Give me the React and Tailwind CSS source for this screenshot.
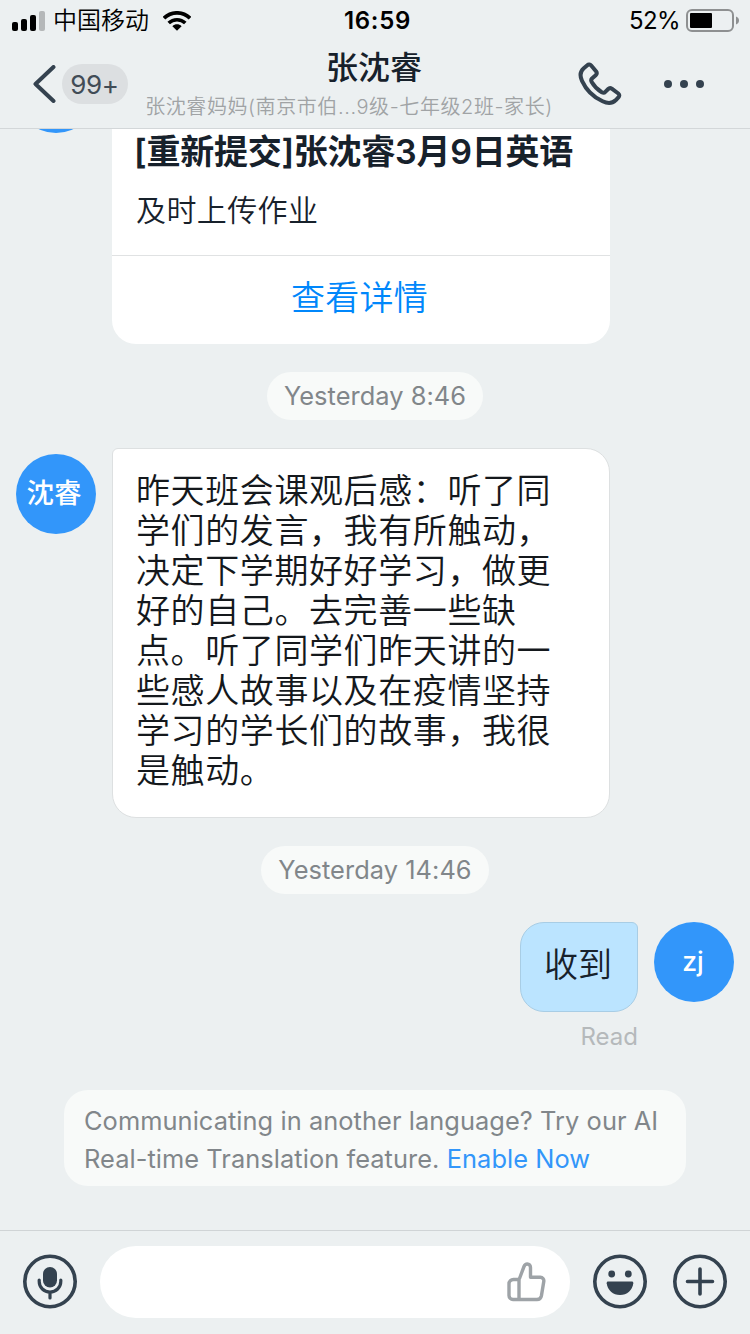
import React from 'react';

const MESSAGE_LINES = [
  '昨天班会课观后感：听了同',
  '学们的发言，我有所触动，',
  '决定下学期好好学习，做更',
  '好的自己。去完善一些缺',
  '点。听了同学们昨天讲的一',
  '些感人故事以及在疫情坚持',
  '学习的学长们的故事，我很',
  '是触动。',
];

const SignalIcon = () => (
  <svg width="33" height="20" viewBox="0 0 33 20" className="shrink-0">
    <rect x="0" y="11" width="6" height="9" rx="2" fill="#000" />
    <rect x="9" y="8" width="6" height="12" rx="2" fill="#000" />
    <rect x="18" y="4" width="6" height="16" rx="2" fill="#000" />
    <rect x="27" y="0" width="6" height="20" rx="2" fill="#b5b8b9" />
  </svg>
);

const WifiIcon = () => (
  <svg width="28" height="20" viewBox="0 0 28 20" fill="none" stroke="#000" className="shrink-0">
    <path d="M1 7.2C8.3 0.1 19.7 0.1 27 7.2" strokeWidth="3.8" />
    <path d="M5.7 12C10.4 7.6 17.6 7.6 22.3 12" strokeWidth="3.6" />
    <path d="M9.4 15.3C12 12.7 16 12.7 18.6 15.3L14 19.8Z" fill="#000" stroke="none" />
  </svg>
);

const BatteryIcon = () => (
  <svg width="54" height="23" viewBox="0 0 54 23" className="shrink-0">
    <rect x="1" y="1" width="46" height="21" rx="5" fill="none" stroke="#8e9091" strokeWidth="2" />
    <rect x="4" y="4" width="22" height="15" rx="1" fill="#000" />
    <path d="M50 7.5c2 .7 3 2.2 3 4s-1 3.3-3 4z" fill="#8e9091" />
  </svg>
);

const PhoneIcon = () => (
  <svg width="44" height="44" viewBox="0 0 44 44" fill="none" stroke="#34424f" strokeWidth="4" strokeLinejoin="round" className="shrink-0">
    <path d="M9.3 3.2C10.5 2.1 12.2 2.4 13.2 3.5L18 9.3C18.9 10.5 18.8 12.2 17.7 13.2L14 16.5C13 17.5 13 18.8 13.7 20C16.3 24.5 19.5 27.7 23.8 30.3C25.1 31 26.4 30.9 27.3 29.9L30.2 27C31.2 26 32.6 25.9 33.8 26.7L40.3 31.5C41.5 32.5 41.6 34 40.6 35.1L37.6 38.3C34.5 41.3 29.5 41.7 24.6 39.3C15.4 35 8 27.6 4 18.8C1.7 13.8 2 9.7 5.5 6.5Z" />
  </svg>
);

const MicIcon = () => (
  <svg width="54" height="54" viewBox="0 0 54 54" fill="none" stroke="#34424f" strokeLinecap="round" className="shrink-0 overflow-visible">
    <circle cx="27" cy="26.5" r="25.2" strokeWidth="3.6" />
    <rect x="20" y="12" width="14" height="20.5" rx="7" fill="#34424f" stroke="none" />
    <path d="M16.2 25v1.5c0 6 4.8 10.5 10.8 10.5s10.8-4.5 10.8-10.5V25" strokeWidth="3.2" />
    <path d="M27 37.5V43" strokeWidth="3.2" />
  </svg>
);

const SmileIcon = () => (
  <svg width="54" height="54" viewBox="0 0 54 54" className="shrink-0 overflow-visible">
    <circle cx="27" cy="26.5" r="25.2" fill="none" stroke="#34424f" strokeWidth="3.6" />
    <circle cx="18.7" cy="19" r="3.4" fill="#34424f" />
    <circle cx="35.3" cy="19" r="3.4" fill="#34424f" />
    <path d="M15.2 26.5h23.6c1 0 1.6.7 1.5 1.7C39.5 35.1 34 40 27 40S14.5 35.1 13.7 28.2c-.1-1 .5-1.7 1.5-1.7z" fill="#34424f" />
  </svg>
);

const PlusIcon = () => (
  <svg width="54" height="54" viewBox="0 0 54 54" fill="none" stroke="#34424f" strokeLinecap="round" className="shrink-0 overflow-visible">
    <circle cx="27" cy="26.5" r="25.2" strokeWidth="3.6" />
    <path d="M14.5 26.5h25M27 14v25" strokeWidth="3.6" />
  </svg>
);

const ThumbIcon = () => (
  <svg width="40" height="40" viewBox="0 0 40 40" fill="none" stroke="#9ea3a7" strokeWidth="3.4" strokeLinejoin="round" className="shrink-0">
    <path d="M12.5 17.5H7.5A4.5 4.5 0 0 0 3 22v11.500a4 4 0 0 0 4 4h24a4.500 4.500 0 0 0 4.400-3.600l2.400-14.500a3.500 3.500 0 0 0-3.400-4.100H24.500V5.500c0-2-1.300-3.500-3.200-3.500-1.600 0-2.700 1-3.300 2.500L13.500 16.500z" />
    <path d="M13 18v19.500" />
  </svg>
);

const Avatar = ({ name, latin }) => (
  <div
    className={`flex h-20 w-20 shrink-0 items-center justify-center rounded-full bg-[#3296fa] pb-px leading-none text-white ${
      latin ? 'pr-[2px] text-[26.5px] font-[450]' : 'pr-1 text-[27.5px] font-medium'
    }`}
  >
    {name}
  </div>
);

const TimePill = ({ children }) => (
  <div className="mt-7 flex h-12 shrink-0 items-center self-center whitespace-nowrap rounded-full bg-[#f8faf9] px-[17px] pt-px text-[25.4px] tracking-[0.05px] text-[#81868a]">
    {children}
  </div>
);

const App = () => {
  return (
    <div className="flex h-[1334px] w-[750px] flex-col overflow-hidden bg-[#ecf0f1] font-[Inter,'Noto_Sans_CJK_SC',sans-serif] text-[#17212b]">
      <header className="h-[129px] shrink-0 border-b border-[#d3d7d9]">
        <div className="grid h-10 grid-cols-[1fr_auto_1fr] items-center pl-3 pr-[10px] text-black">
          <div className="flex items-center">
            <SignalIcon />
            <span className="ml-2 pt-px text-[24px] font-[350] leading-10">中国移动</span>
            <span className="ml-[14px]"><WifiIcon /></span>
          </div>
          <span className="ml-[3px] pt-px text-[24px] font-semibold leading-10 tracking-[0.7px]">16:59</span>
          <div className="flex items-center justify-end">
            <span className="mr-[6px] pt-px text-[24px] leading-10 tracking-[-0.6px]">52%</span>
            <BatteryIcon />
          </div>
        </div>

        <div className="flex h-[88px] items-center">
          <div className="flex w-[145px] shrink-0 items-center pl-[33px]">
            <svg width="23" height="38" viewBox="0 0 23 38" fill="none" stroke="#34424f" strokeWidth="4" strokeLinecap="round" strokeLinejoin="round">
              <path d="M20.5 2L2.5 19L20.5 36" />
            </svg>
            <span className="ml-[6px] flex h-10 w-[66px] items-center justify-center rounded-full bg-[#dcdfe1] pt-px pr-px text-[26px] tracking-[-0.3px] text-[#414c56]">
              99+
            </span>
          </div>
          <div className="flex h-full w-[408px] shrink-0 flex-col items-center whitespace-nowrap">
            <h1 className="ml-[50px] mt-1 text-[32px] font-medium leading-[48px]">张沈睿</h1>
            <p className="text-[20px] font-[350] leading-[30px] tracking-[0.58px] text-[#a0a3a5]">
              张沈睿妈妈(南京市伯...9级-七年级2班-家长)
            </p>
          </div>
          <div className="ml-[25px] flex items-center">
            <PhoneIcon />
            <div className="ml-[42px] flex gap-2">
              <i className="h-2 w-2 rounded-full bg-[#34424f]" />
              <i className="h-2 w-2 rounded-full bg-[#34424f]" />
              <i className="h-2 w-2 rounded-full bg-[#34424f]" />
            </div>
          </div>
        </div>
      </header>

      <main className="flex min-h-0 flex-1 flex-col justify-end overflow-hidden px-4">
        <div className="flex h-[296px] shrink-0 items-start gap-4">
          {/* only the bottom edge of this avatar is below the header */}
          <div className="mt-[5px]"><Avatar /></div>
          <div className="flex h-full w-[498px] flex-col justify-end overflow-hidden rounded-[24px] rounded-tl-md bg-white">
            <div className="whitespace-nowrap px-6">
              <h2 className="-ml-[2px] text-[34px] font-semibold leading-[48px] tracking-[-0.25px]">[重新提交]张沈睿3月9日英语</h2>
              <p className="mt-3 text-[30px] font-[350] leading-[44px] tracking-[0.4px]">及时上传作业</p>
            </div>
            <button className="mt-[23px] h-[89px] border-t border-[#e0e2e3] pb-[6px] pr-[3px] text-[34px] font-[350] tracking-[0.3px] text-[#0087fb]">
              查看详情
            </button>
          </div>
        </div>

        <TimePill>Yesterday 8:46</TimePill>

        <div className="mt-7 flex shrink-0 items-start gap-4">
          <div className="mt-[6px]"><Avatar name="沈睿" /></div>
          <div className="h-[370px] w-[498px] rounded-[24px] rounded-tl-md border border-[#dde0e1] bg-white px-[23px] pt-[22px] text-[34px] font-[350] leading-10 tracking-[0.6px] text-[#14181c]">
            {MESSAGE_LINES.map((line) => (
              <p key={line} className="whitespace-nowrap">{line}</p>
            ))}
          </div>
        </div>

        <TimePill>Yesterday 14:46</TimePill>

        <div className="mt-7 flex shrink-0 items-start justify-end gap-4">
          <div className="flex flex-col items-end">
            <div className="flex h-[90px] w-[118px] items-center justify-center rounded-[24px] rounded-tr-md border border-[#a8cde5] bg-[#bbe4ff] pb-[6px] pr-[2px] text-[34px] font-[350]">
              收到
            </div>
            <span className="mt-[9px] text-[24px] leading-8 text-[#b5b9bb]">Read</span>
          </div>
          <Avatar name="zj" latin />
        </div>

        <div className="mb-11 mt-[37px] h-24 w-[622px] shrink-0 self-center whitespace-nowrap rounded-[24px] bg-[#f8faf9] px-5 pt-3 text-[25.4px] leading-[38px] tracking-[0.06px] text-[#81868a]">
          <p>Communicating in another language? Try our AI</p>
          <p>
            Real-time Translation feature. <span className="text-[#3296fa]">Enable Now</span>
          </p>
        </div>
      </main>

      <footer className="flex h-[104px] shrink-0 items-center border-t border-[#d0d4d6] px-[23px] pb-[2px]">
        <MicIcon />
        <div className="ml-[23px] flex h-[72px] w-[470px] items-center justify-end rounded-full bg-white pr-6">
          <ThumbIcon />
        </div>
        <span className="ml-[23px]"><SmileIcon /></span>
        <span className="ml-[26px]"><PlusIcon /></span>
      </footer>
    </div>
  );
};

export default App;
